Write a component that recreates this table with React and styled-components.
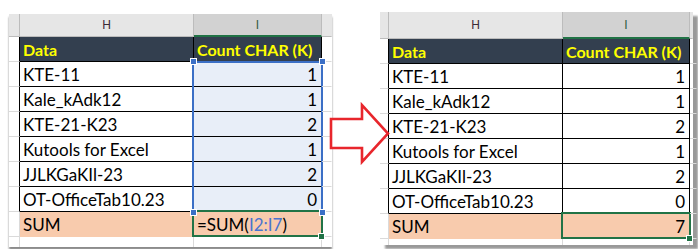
import React from 'react';
import styled, { createGlobalStyle } from 'styled-components';

const GRID = '#dadada';
const INK = '#000000';
const PEACH = '#f8cbad';
const GREEN = '#217346';
const BLUE = '#3b6fc6';
const NAVY = '#333f4f';

const GlobalStyle = createGlobalStyle`
  html, body { margin: 0; padding: 0; background: #ffffff; }
  body { font-family: Lato, "Open Sans", sans-serif; }
`;

const Page = styled.div`
  display: flex;
  align-items: flex-start;
  width: 698px;
  height: 249px;
  overflow: hidden;
`;

const Sheet = styled.div`
  display: flex;
  flex-shrink: 0;
  margin: ${p => p.$top}px 0 0 ${p => p.$left}px;
  background: #ffffff;
  box-shadow: ${p => p.$shadow};
`;

const Column = styled.div`
  display: flex;
  flex-direction: column;
  flex-shrink: 0;
  width: ${p => p.$w}px;
`;

const ColHead = styled.div`
  box-sizing: border-box;
  height: ${p => p.$h}px;
  display: flex;
  align-items: center;
  justify-content: center;
  background: ${p => (p.$active ? '#d2d2d2' : '#e6e6e6')};
  border-right: 1px solid ${p => (p.$open ? '#e6e6e6' : '#bcbcbc')};
  border-bottom: ${p => (p.$active ? `2px solid ${GREEN}` : '1px solid #bcbcbc')};
  font-family: "Liberation Sans", Arial, sans-serif;
  font-size: 12px;
  color: ${p => (p.$active ? '#2f5b41' : '#3a2a36')};
`;

const Cell = styled.div`
  position: relative;
  box-sizing: border-box;
  height: 25px;
  padding: 0 ${p => (p.$num ? 4 : 3)}px 0 3px;
  display: flex;
  align-items: center;
  justify-content: ${p => (p.$num ? 'flex-end' : 'flex-start')};
  background: ${p => p.$fill || 'transparent'};
  border-right: 1px solid ${p => p.$edge || GRID};
  border-bottom: 1px solid ${p => p.$base || p.$edge || GRID};
  font-size: ${p => (p.$bold ? 16 : 17)}px;
  font-weight: ${p => (p.$bold ? 700 : 400)};
  color: ${p => p.$ink || INK};
  white-space: nowrap;
`;

const Tail = styled.div`
  box-sizing: border-box;
  height: ${p => p.$h}px;
  border-right: 1px solid ${p => (p.$open ? 'transparent' : GRID)};
`;

const Selection = styled.div`
  position: relative;
  background: #e8eef8;
  &::after {
    content: '';
    position: absolute;
    left: -2px;
    right: -1px;
    top: -1px;
    bottom: -1px;
    border: 2px solid ${BLUE};
    pointer-events: none;
  }
`;

const ActiveCell = styled(Cell)`
  &::after {
    content: '';
    position: absolute;
    left: -2px;
    right: -2px;
    top: -2px;
    bottom: -1px;
    border: 2px solid ${GREEN};
    pointer-events: none;
  }
`;

const Handle = styled.span`
  position: absolute;
  z-index: 2;
  width: 5px;
  height: 5px;
  background: ${p => p.$color};
  border: 1px solid #ffffff;
  ${p => (p.$top ? 'top' : 'bottom')}: -4px;
  ${p => (p.$left ? 'left' : 'right')}: -4px;
`;

const Ref = styled.span`
  color: #4a74d0;
`;

const ArrowSlot = styled.div`
  position: relative;
  z-index: 1;
  flex-shrink: 0;
  width: 48px;
  svg {
    display: block;
    margin: 102px 0 0 -3px;
    overflow: visible;
  }
`;

const rows = [
  ['KTE-11', 1],
  ['Kale_kAdk12', 1],
  ['KTE-21-K23', 2],
  ['Kutools for Excel', 1],
  ['JJLKGaKIl-23', 2],
  ['OT-OfficeTab10.23', 0],
];

function Arrow() {
  return (
    <svg width="62" height="64" viewBox="0 0 62 64">
      <polygon
        points="2,17 33,17 33,3 59,31.5 33,60 33,46 2,46"
        fill="#ffffff"
        stroke="#e8262c"
        strokeWidth="2.6"
        strokeLinejoin="miter"
      />
    </svg>
  );
}

function Spreadsheet({ top, left, dims, shadow, selecting }) {
  const numberCells = rows.map(([label, n]) => (
    <Cell key={label} $num $edge={INK}>{n}</Cell>
  ));

  return (
    <Sheet $top={top} $left={left} $shadow={shadow}>
      <Column $w={dims.stub}>
        <ColHead $h={dims.head} />
        {rows.concat([['', ''], ['sum', '']]).map(([label], i) => (
          <Cell key={i} $edge={i < 7 ? INK : GRID} $base={GRID} />
        ))}
        <Tail $h={dims.tail} />
      </Column>

      <Column $w={dims.h}>
        <ColHead $h={dims.head}>H</ColHead>
        <Cell $fill={NAVY} $edge={INK} $bold $ink="#ffff00">Data</Cell>
        {rows.map(([label]) => (
          <Cell key={label} $edge={INK}>{label}</Cell>
        ))}
        <Cell $fill={PEACH} $edge={PEACH}>SUM</Cell>
        <Tail $h={dims.tail} />
      </Column>

      <Column $w={dims.i}>
        <ColHead $h={dims.head} $active>I</ColHead>
        <Cell $fill={NAVY} $edge={INK} $bold $ink="#ffff00">Count CHAR (K)</Cell>
        {selecting ? (
          <Selection>
            {numberCells}
            <Handle $color={BLUE} $top $left />
            <Handle $color={BLUE} $top />
            <Handle $color={BLUE} $left />
            <Handle $color={BLUE} />
          </Selection>
        ) : (
          numberCells
        )}
        {selecting ? (
          <ActiveCell $fill={PEACH} $edge={PEACH}>
            =SUM(<Ref>I2:I7</Ref>)
            <Handle $color={GREEN} />
          </ActiveCell>
        ) : (
          <ActiveCell $fill={PEACH} $edge={PEACH} $num>
            7
            <Handle $color={GREEN} />
          </ActiveCell>
        )}
        <Tail $h={dims.tail} />
      </Column>

      <Column $w={dims.ext}>
        <ColHead $h={dims.head} $open />
        {rows.concat([['', ''], ['sum', '']]).map((r, i) => (
          <Cell key={i} $edge="transparent" $base={GRID} />
        ))}
        <Tail $h={dims.tail} $open />
      </Column>
    </Sheet>
  );
}

export default function App() {
  return (
    <Page>
      <GlobalStyle />
      <Spreadsheet
        top={14}
        left={9}
        selecting
        dims={{ stub: 11, h: 174, i: 128, ext: 10, head: 23, tail: 10 }}
        shadow="0 3px 2px rgba(0, 0, 0, 0.45)"
      />
      <ArrowSlot>
        <Arrow />
      </ArrowSlot>
      <Spreadsheet
        top={12}
        left={0}
        dims={{ stub: 9, h: 174, i: 127, ext: 3, head: 27, tail: 6 }}
        shadow="5px 4px 2px rgba(0, 0, 0, 0.4)"
      />
    </Page>
  );
}
